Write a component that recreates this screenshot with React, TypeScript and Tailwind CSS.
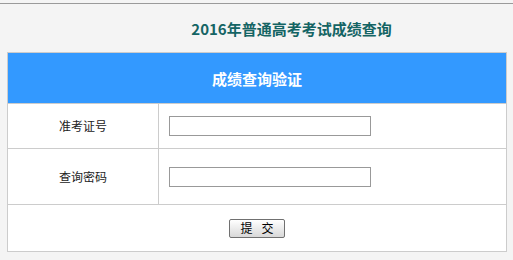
const font = { fontFamily: '"Noto Sans CJK SC", "Liberation Sans", sans-serif' }

const Field = ({ label, type, h }: { label: string; type: string; h: string }) => {
  return (
    <div className={`flex border-t border-[#ccc] ${h}`}>
      <div className="flex w-[151px] items-center justify-center border-r border-[#ccc] text-[12px] text-[#222]">
        {label}
      </div>
      <div className="flex flex-1 items-center pl-[10px]">
        <input type={type} className="h-[20px] w-[202px] border border-[#999] bg-white px-1 text-[12px] outline-none" />
      </div>
    </div>
  )
}

const App = () => {
  return (
    <div className="min-h-[260px] w-full bg-[#f4f4f4] pt-[3px]" style={font}>
      <div className="h-px bg-[#9a9a9a]" />
      <div className="flex h-[48px] items-center justify-center pl-[70px]">
        <h1 className="text-[15px] font-bold leading-none text-[#146464]">2016年普通高考考试成绩查询</h1>
      </div>
      <div className="ml-[7px] w-[500px] border border-[#ccc] bg-white">
        <div className="flex h-[50px] items-center justify-center bg-[#3399ff] pt-[3px] text-[15px] font-bold text-white">
          成绩查询验证
        </div>
        <Field label="准考证号" type="text" h="h-[45px]" />
        <Field label="查询密码" type="password" h="h-[56px]" />
        <div className="flex h-[47px] items-center justify-center border-t border-[#ccc]">
          <button className="flex h-[19px] w-[56px] items-center justify-center gap-[9px] rounded-[2px] border border-[#707070] bg-gradient-to-b from-white to-[#d8d8d8] text-[12px] leading-none text-black">
            <span>提</span>
            <span>交</span>
          </button>
        </div>
      </div>
    </div>
  )
}

export default App
